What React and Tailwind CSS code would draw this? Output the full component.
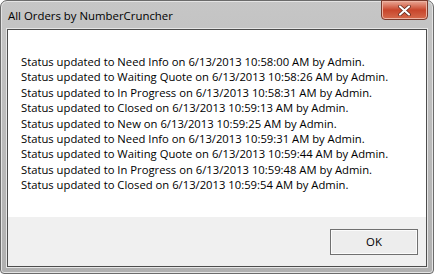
const lines = [
  "Status updated to Need Info on 6/13/2013 10:58:00 AM by Admin.",
  "Status updated to Waiting Quote on 6/13/2013 10:58:26 AM by Admin.",
  "Status updated to In Progress on 6/13/2013 10:58:31 AM by Admin.",
  "Status updated to Closed on 6/13/2013 10:59:13 AM by Admin.",
  "Status updated to New on 6/13/2013 10:59:25 AM by Admin.",
  "Status updated to Need Info on 6/13/2013 10:59:31 AM by Admin.",
  "Status updated to Waiting Quote on 6/13/2013 10:59:44 AM by Admin.",
  "Status updated to In Progress on 6/13/2013 10:59:48 AM by Admin.",
  "Status updated to Closed on 6/13/2013 10:59:54 AM by Admin.",
];

function App() {
  return (
    <div className="w-[434px] h-[274px] bg-white" style={{ fontFamily: "'Open Sans', 'Noto Sans', sans-serif" }}>
      {/* Window frame */}
      <div className="w-full h-full flex flex-col bg-gradient-to-b from-[#c6c6c6] via-[#bbbbbb] to-[#b0b0b0] border border-[#6b6b6b] rounded-t-[7px] rounded-b-[4px] shadow-[inset_0_0_0_1px_#e4e4e4] px-[6px] pb-[6px]">
        {/* Title bar */}
        <div className="h-[28px] flex items-start justify-between shrink-0">
          <span className="text-[11.4px] text-black pl-[1px] pt-[6px] leading-[18px] whitespace-nowrap">All Orders by NumberCruncher</span>
          <div className="w-[47px] h-[20px] mt-[-1px] mr-[-1px] rounded-b-[4px] border border-[#7a3a2c] bg-gradient-to-b from-[#e8a796] via-[#c8452b] to-[#d56a4c] shadow-[inset_0_0_0_1px_#eeb3a2] flex items-center justify-center">
            <svg width="13" height="11" viewBox="0 0 13 11">
              <path d="M2 1.5 L11 9.5 M11 1.5 L2 9.5" stroke="#5a2418" strokeWidth="3.6" strokeLinecap="round" />
              <path d="M2 1.5 L11 9.5 M11 1.5 L2 9.5" stroke="#ffffff" strokeWidth="2.2" strokeLinecap="round" />
            </svg>
          </div>
        </div>

        {/* Client area */}
        <div className="flex-1 flex flex-col border border-[#4d4d4d] bg-white shadow-[0_0_0_1px_#e6e6e6] min-h-0">
          <div className="flex-1 pl-[13px] pt-[24px] text-[11.25px] leading-[15.4px] text-black whitespace-nowrap overflow-hidden">
            {lines.map((l, i) => (
              <div key={i}>{l}</div>
            ))}
          </div>
          <div className="h-[49px] shrink-0 bg-[#f0f0f0] flex items-start justify-end pr-[8px] pt-[12px]">
            <button className="w-[88px] h-[26px] border border-[#707070] bg-[#ededed] shadow-[inset_0_0_0_1px_#fbfbfb] text-[11.4px] text-black">
              OK
            </button>
          </div>
        </div>
      </div>
    </div>
  );
}

export default App;
